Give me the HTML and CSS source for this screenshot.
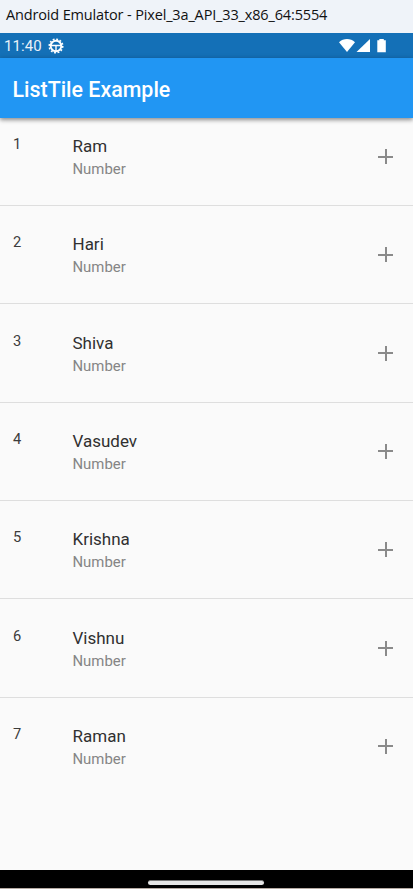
FILE: index.html
```html
<!DOCTYPE html>
<html lang="en">
<head>
<meta charset="utf-8">
<title>ListTile Example</title>
<link rel="stylesheet" href="styles.css">
</head>
<body>
<div class="window-title"><span>Android Emulator - Pixel_3a_API_33_x86_64:5554</span></div>
<div class="status-bar">
  <span class="clock">11:40</span>
  <svg class="gear" width="16" height="16" viewBox="0 0 16 16" fill="none" stroke="#fff">
    <circle cx="8" cy="8" r="5.300" stroke-width="1.900"/>
    <circle cx="8" cy="8" r="6.800" stroke-width="1.500" stroke-dasharray="1.900 1.660"/>
    <path d="M3 7.500h10M8 8v5" stroke-width="1.400"/>
  </svg>
  <svg class="signals" width="48" height="16" viewBox="0 0 48 16" fill="#fff">
    <path d="M0 4.200C4.500 0 11.500 0 16 4.200L8 14z"/>
    <path d="M31 1v13H17.500z"/>
    <path d="M38.300 2.200h2V1h4.500v1.200h2V14.300h-8.500z"/>
  </svg>
</div>
<header class="app-bar"><h1>ListTile Example</h1></header>
<main class="list">
  <div class="tile"><span class="index">1</span><div class="text"><div class="name">Ram</div><div class="sub">Number</div></div><span class="plus"></span></div>
  <div class="tile"><span class="index">2</span><div class="text"><div class="name">Hari</div><div class="sub">Number</div></div><span class="plus"></span></div>
  <div class="tile"><span class="index">3</span><div class="text"><div class="name">Shiva</div><div class="sub">Number</div></div><span class="plus"></span></div>
  <div class="tile"><span class="index">4</span><div class="text"><div class="name">Vasudev</div><div class="sub">Number</div></div><span class="plus"></span></div>
  <div class="tile"><span class="index">5</span><div class="text"><div class="name">Krishna</div><div class="sub">Number</div></div><span class="plus"></span></div>
  <div class="tile"><span class="index">6</span><div class="text"><div class="name">Vishnu</div><div class="sub">Number</div></div><span class="plus"></span></div>
  <div class="tile"><span class="index">7</span><div class="text"><div class="name">Raman</div><div class="sub">Number</div></div><span class="plus"></span></div>
</main>
<footer class="nav-bar"><span class="handle"></span></footer>
</body>
</html>
```
FILE: styles.css
```css
* { box-sizing: border-box; }
body {
  margin: 0;
  height: 889px;
  display: flex;
  flex-direction: column;
  overflow: hidden;
  background: #fafafa;
  font-family: Roboto, sans-serif;
}
.window-title {
  flex: none;
  height: 33px;
  padding-left: 6px;
  background: #eff3f9;
  color: #111;
  font: 14.5px/30px "Open Sans", "Noto Sans", sans-serif;
  letter-spacing: -0.15px;
  white-space: nowrap;
}
.status-bar {
  flex: none;
  height: 25px;
  display: flex;
  align-items: center;
  padding: 0 26px 0 4px;
  background: #1470b7;
  color: #e8f1f8;
}
.clock { width: 44px; padding-top: 1px; font-size: 15px; line-height: 25px; letter-spacing: 0.1px; }
.signals { margin-left: auto; }
.app-bar {
  flex: none;
  position: relative;
  height: 60px;
  padding-left: 12.5px;
  background: #2196f3;
  box-shadow: 0 2px 4px rgba(0, 0, 0, 0.35), 0 1px 6px rgba(0, 0, 0, 0.15);
}
h1 {
  margin: 0;
  color: #fff;
  font-size: 21.4px;
  font-weight: 500;
  line-height: 63px;
}
.list { flex: 1; }
.tile {
  height: 98.33px;
  display: flex;
  padding: 16px 17px 0 13px;
  border-bottom: 1px solid #dedede;
}
.tile:first-child { height: 88.15px; padding-top: 6px; }
.tile:nth-child(3n) { padding-top: 16.3px; }
.tile:last-child { border-bottom: 0; }
.index { width: 59.5px; padding-top: 11px; font-size: 14.7px; line-height: 18px; color: #3c3c3c; }
.text { flex: 1; padding-top: 11px; }
.name { font-size: 17px; line-height: 22px; color: #303030; }
.sub { font-size: 14.9px; line-height: 24px; color: #858585; }
.plus {
  width: 15px;
  height: 15px;
  margin-top: 25px;
  margin-right: 3px;
  background:
    linear-gradient(#8a8a8a, #8a8a8a) center / 15px 2px no-repeat,
    linear-gradient(#8a8a8a, #8a8a8a) center / 2px 15px no-repeat;
}
.nav-bar {
  flex: none;
  height: 19px;
  display: flex;
  justify-content: center;
  padding: 10px 2px 0 0;
  background: #000;
  border-bottom: 1px solid #b5aaa3;
}
.handle { width: 116px; height: 5px; border-radius: 3px; background: #e6e6e6; border-top: 1px solid #777; }
```
